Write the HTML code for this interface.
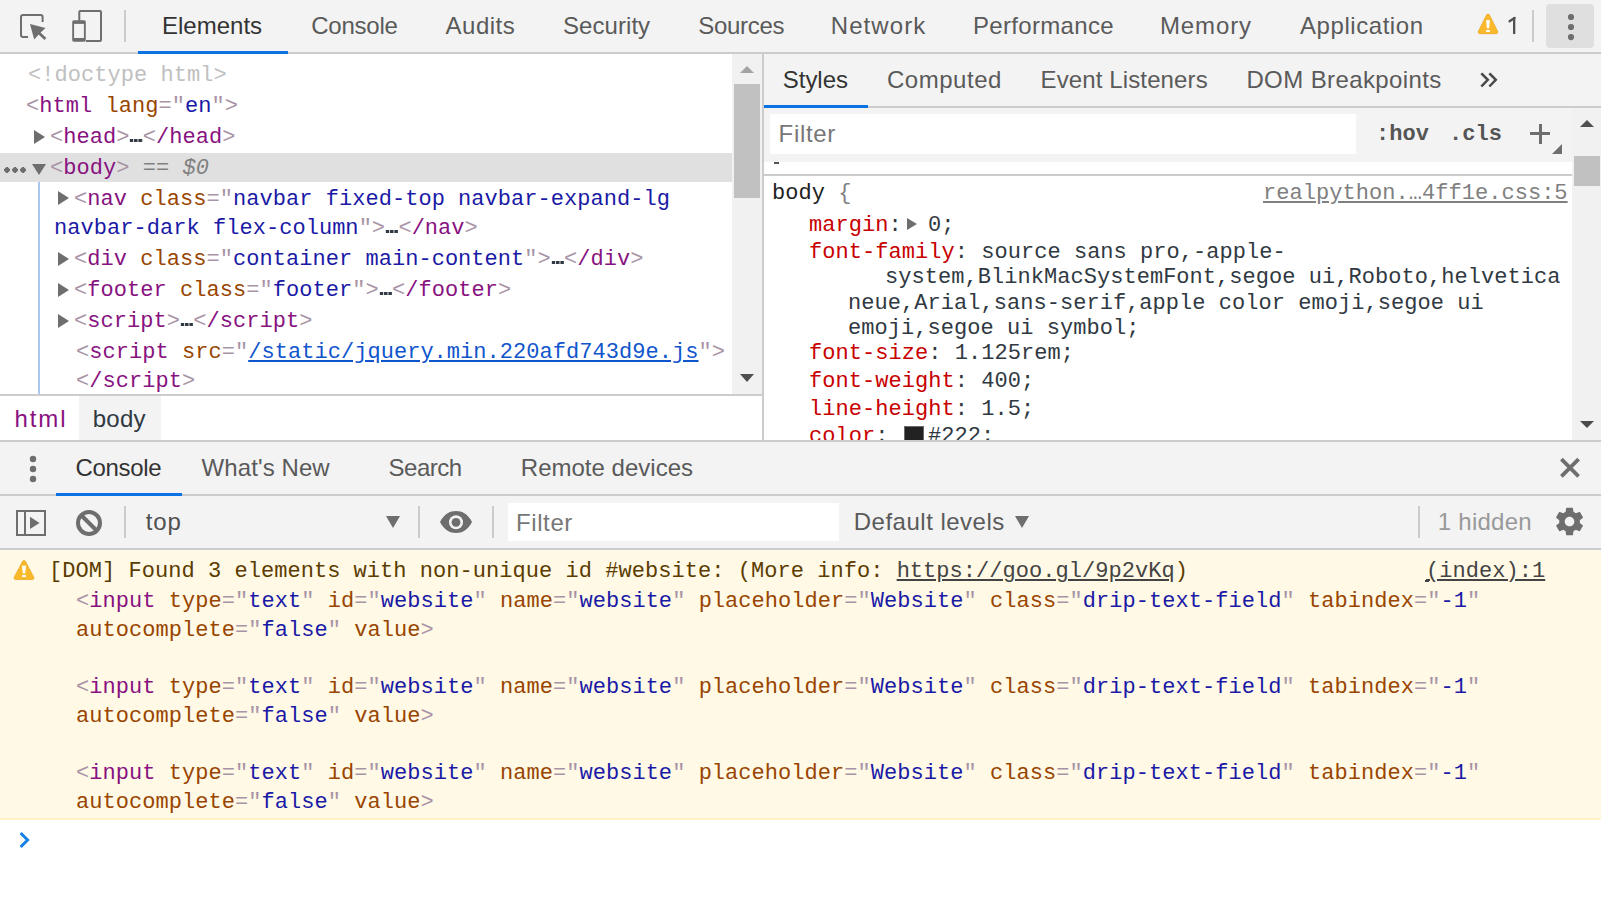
<!DOCTYPE html>
<html><head><meta charset="utf-8">
<style>
*{box-sizing:border-box;margin:0;padding:0}
html,body{width:1601px;height:898px;overflow:hidden;background:#fff}
body{position:relative;font-family:"Liberation Sans",sans-serif;font-size:24px;color:#333}
.a{position:absolute}
.bar{background:#f3f3f3}
.bd{background:#cccccc}
.t{position:absolute;white-space:pre;line-height:30px;font-size:24px;color:#5a5a5a}
.m{position:absolute;white-space:pre;font-family:"Liberation Mono",monospace;font-size:22px;line-height:29px;color:#222;letter-spacing:0.042px}
.tg{color:#881280}
.an{color:#994500}
.av{color:#1a1aa6}
.pu{color:#a894a6}
.dt{color:#c0c0c0}
.el{color:#222}
.pn{color:#c80000}
.pv{color:#303942}
.ul{text-decoration:underline}
.cl{color:#444;text-decoration:underline}
.ell{color:transparent;background:linear-gradient(90deg,#303942 3.2px,transparent 3.2px) 0.8px 14.3px/4.3px 3px repeat-x}
.lk{color:#1155cc;text-decoration:underline}
.tri-r{width:0;height:0;border-top:7px solid transparent;border-bottom:7px solid transparent;border-left:11px solid #6e6e6e}
.tri-d{width:0;height:0;border-left:7px solid transparent;border-right:7px solid transparent;border-top:11px solid #6e6e6e}
.dot3{width:22px;height:6px;background:radial-gradient(circle at 3px 3px,#6e6e6e 2.6px,transparent 3px) 0 0/8px 6px repeat-x}

</style></head>
<body>
<!-- ===== top toolbar ===== -->
<div class="a bar" style="left:0;top:0;width:1601px;height:52px"></div>
<div class="a bd" style="left:0;top:52px;width:1601px;height:2px"></div>
<div class="a" style="left:138px;top:51px;width:150px;height:3px;background:#0a72e2"></div>
<!-- top icons -->
<svg class="a" style="left:0;top:0" width="130" height="52" viewBox="0 0 130 52">
<path d="M28.1 37H23a2 2 0 0 1-2-2V17a2 2 0 0 1 2-2h17.6a2 2 0 0 1 2 2v5" fill="none" stroke="#6e6e6e" stroke-width="2"/>
<path d="M30 23.9L45.5 28.1L39.6 33.4L34.2 39.4Z" fill="#6e6e6e"/>
<path d="M38 32L45.4 39" stroke="#6e6e6e" stroke-width="2.8"/>
<path d="M86 41H100a1 1 0 0 0 1-1V12a1 1 0 0 0-1-1H80.3a1 1 0 0 0-1 1V21" fill="none" stroke="#6e6e6e" stroke-width="2"/>
<rect x="72.2" y="20.2" width="13.6" height="21.5" rx="1.6" fill="#6e6e6e"/>
<rect x="74.1" y="23.9" width="9.8" height="14.1" fill="#f3f3f3"/>
<rect x="124" y="10" width="2" height="32" fill="#cbcbcb"/>
</svg>
<svg class="a" style="left:1476px;top:12px" width="24" height="24" viewBox="0 0 24 24"><path d="M12 2C12.7 2 13.2 2.4 13.5 3L21.6 19.3C22.1 20.5 21.4 21.7 20.2 21.7H3.8C2.6 21.7 1.9 20.5 2.4 19.3L10.5 3C10.8 2.4 11.3 2 12 2Z" fill="#fab92b" stroke="#e6a31c" stroke-width="0.7"/><path d="M10.1 8H13.9L13.2 16.3H10.8Z" fill="#fff"/><rect x="10.1" y="18" width="3.8" height="2" fill="#fff"/></svg>
<svg class="a" style="left:1505px;top:14px" width="14" height="22" viewBox="0 0 14 22"><rect x="8" y="3.2" width="2.3" height="16.8" fill="#505050"/><path d="M9.6 3.9L4.6 7.3" stroke="#505050" stroke-width="2.3" stroke-linecap="round"/></svg>
<div class="a" style="left:1532px;top:10px;width:2px;height:32px;background:#cbcbcb"></div>
<div class="a" style="left:1546px;top:4px;width:48px;height:44px;background:#dfdfdf;border-radius:4px"></div>
<svg class="a" style="left:1564px;top:10px" width="14" height="34" viewBox="0 0 14 34"><circle cx="7" cy="7" r="3.1" fill="#6e6e6e"/><circle cx="7" cy="17" r="3.1" fill="#6e6e6e"/><circle cx="7" cy="27.1" r="3.1" fill="#6e6e6e"/></svg>

<div class="t" style="left:162.00px;top:11px;color:#333;letter-spacing:0.000px">Elements</div>
<div class="t" style="left:311.20px;top:11px;letter-spacing:-0.233px">Console</div>
<div class="t" style="left:445.60px;top:11px;letter-spacing:0.480px">Audits</div>
<div class="t" style="left:563.00px;top:11px;letter-spacing:0.058px">Security</div>
<div class="t" style="left:698.20px;top:11px;letter-spacing:-0.298px">Sources</div>
<div class="t" style="left:830.80px;top:11px;letter-spacing:1.066px">Network</div>
<div class="t" style="left:973.00px;top:11px;letter-spacing:0.320px">Performance</div>
<div class="t" style="left:1160.00px;top:11px;letter-spacing:0.880px">Memory</div>
<div class="t" style="left:1300.00px;top:11px;letter-spacing:0.560px">Application</div>

<!-- ===== elements panel ===== -->
<div class="a" style="left:0;top:54px;width:762px;height:340px;background:#fff;overflow:hidden">
</div>
<!-- selected row -->
<div class="a" style="left:0;top:153px;width:732px;height:29px;background:#e0e0e0"></div>
<!-- guide line -->
<div class="a" style="left:38px;top:182px;width:2px;height:212px;background:#a8c8ec"></div>
<div class="m dt" style="left:28px;top:61px">&lt;!doctype html&gt;</div>
<div class="m" style="left:26px;top:92px"><span class="pu">&lt;</span><span class="tg">html</span> <span class="an">lang</span><span class="pu">="</span><span class="av">en</span><span class="pu">"&gt;</span></div>
<div class="m" style="left:50px;top:123px"><span class="pu">&lt;</span><span class="tg">head</span><span class="pu">&gt;</span><span class="ell">…</span><span class="pu">&lt;</span><span class="tg">/head</span><span class="pu">&gt;</span></div>
<div class="m" style="left:50px;top:154px"><span class="pu">&lt;</span><span class="tg">body</span><span class="pu">&gt;</span> <span style="color:#808080">== <i>$0</i></span></div>
<div class="m" style="left:74px;top:185px"><span class="pu">&lt;</span><span class="tg">nav</span> <span class="an">class</span><span class="pu">="</span><span class="av">navbar fixed-top navbar-expand-lg</span></div>
<div class="m" style="left:54px;top:214px"><span class="av">navbar-dark flex-column</span><span class="pu">"&gt;</span><span class="ell">…</span><span class="pu">&lt;</span><span class="tg">/nav</span><span class="pu">&gt;</span></div>
<div class="m" style="left:74px;top:245px"><span class="pu">&lt;</span><span class="tg">div</span> <span class="an">class</span><span class="pu">="</span><span class="av">container main-content</span><span class="pu">"&gt;</span><span class="ell">…</span><span class="pu">&lt;</span><span class="tg">/div</span><span class="pu">&gt;</span></div>
<div class="m" style="left:74px;top:276px"><span class="pu">&lt;</span><span class="tg">footer</span> <span class="an">class</span><span class="pu">="</span><span class="av">footer</span><span class="pu">"&gt;</span><span class="ell">…</span><span class="pu">&lt;</span><span class="tg">/footer</span><span class="pu">&gt;</span></div>
<div class="m" style="left:74px;top:307px"><span class="pu">&lt;</span><span class="tg">script</span><span class="pu">&gt;</span><span class="ell">…</span><span class="pu">&lt;</span><span class="tg">/script</span><span class="pu">&gt;</span></div>
<div class="m" style="left:76px;top:338px"><span class="pu">&lt;</span><span class="tg">script</span> <span class="an">src</span><span class="pu">="</span><span class="lk">/static/jquery.min.220afd743d9e.js</span><span class="pu">"&gt;</span></div>
<div class="m" style="left:76px;top:367px"><span class="pu">&lt;</span><span class="tg">/script</span><span class="pu">&gt;</span></div>
<!-- triangles -->
<div class="a tri-r" style="left:34px;top:130px"></div>
<div class="a tri-d" style="left:32px;top:164px"></div>
<div class="a tri-r" style="left:58px;top:191px"></div>
<div class="a tri-r" style="left:58px;top:252px"></div>
<div class="a tri-r" style="left:58px;top:283px"></div>
<div class="a tri-r" style="left:58px;top:314px"></div>
<!-- dots on selected -->
<div class="a dot3" style="left:4px;top:167px"></div>
<!-- scrollbar -->
<div class="a" style="left:732px;top:54px;width:30px;height:340px;background:#f1f1f1"></div>
<div class="a" style="left:734px;top:84px;width:26px;height:114px;background:#c1c1c1"></div>
<div class="a" style="left:740px;top:66px;width:0;height:0;border-left:7px solid transparent;border-right:7px solid transparent;border-bottom:7px solid #a3a3a3"></div>
<div class="a" style="left:740px;top:374px;width:0;height:0;border-left:7px solid transparent;border-right:7px solid transparent;border-top:8px solid #505050"></div>
<!-- breadcrumbs -->
<div class="a bd" style="left:0;top:394px;width:762px;height:2px"></div>
<div class="a" style="left:79px;top:396px;width:82px;height:44px;background:#f3f3f3"></div>
<div class="t" style="left:14.40px;top:404px;color:#881280;letter-spacing:1.933px">html</div>
<div class="t" style="left:92.80px;top:404px;color:#303942;letter-spacing:0.200px">body</div>
<!-- divider -->
<div class="a bd" style="left:762px;top:54px;width:2px;height:386px"></div>


<!-- ===== styles pane ===== -->
<div class="a" style="left:764px;top:54px;width:837px;height:386px;background:#fff;overflow:hidden">
</div>
<!-- styles tabbar -->
<div class="a bar" style="left:764px;top:54px;width:837px;height:52px"></div>
<div class="a bd" style="left:764px;top:106px;width:837px;height:2px"></div>
<div class="a" style="left:764px;top:105px;width:104px;height:3px;background:#0a72e2"></div>
<div class="t" style="left:782.80px;top:65px;color:#333;letter-spacing:-0.040px">Styles</div>
<div class="t" style="left:887.00px;top:65px;letter-spacing:0.517px">Computed</div>
<div class="t" style="left:1040.60px;top:65px;letter-spacing:0.116px">Event Listeners</div>
<div class="t" style="left:1246.40px;top:65px;letter-spacing:0.399px">DOM Breakpoints</div>
<svg class="a" style="left:1476px;top:68px" width="28" height="24" viewBox="0 0 28 24"><path d="M6.2 6.2L11.8 11.8L6.2 17.6M14.2 6.2L19.8 11.8L14.2 17.6" fill="none" stroke="#4a4a4a" stroke-width="2.5" stroke-linecap="square"/></svg>
<!-- filter toolbar -->
<div class="a bar" style="left:764px;top:108px;width:837px;height:54px"></div>
<div class="a" style="left:770px;top:114px;width:586px;height:40px;background:#fff"></div>
<div class="t" style="left:778.60px;top:119px;color:#777;letter-spacing:0.680px">Filter</div>
<div class="m" style="left:1376px;top:120px;font-weight:bold;color:#555">:hov</div>
<div class="m" style="left:1449px;top:120px;font-weight:bold;color:#555">.cls</div>
<div class="a" style="left:1530px;top:132px;width:20px;height:3px;background:#6e6e6e"></div>
<div class="a" style="left:1539px;top:124px;width:3px;height:20px;background:#6e6e6e"></div>
<div class="a" style="left:1552px;top:144px;width:0;height:0;border-left:10px solid transparent;border-bottom:10px solid #6e6e6e"></div>
<!-- strip -->
<div class="a bd" style="left:764px;top:174px;width:808px;height:2px"></div>
<div class="a" style="left:774px;top:162px;width:5px;height:2px;background:#555"></div>
<!-- rule -->
<div class="m" style="left:772px;top:179px"><span style="color:#222">body</span> <span style="color:#808080">{</span></div>
<div class="m" style="left:1263px;top:179px;color:#808080;text-decoration:underline">realpython.…4ff1e.css:5</div>
<div class="m pn" style="left:809px;top:211px">margin<span class="pv">:</span></div>
<div class="a" style="left:907px;top:217.5px;width:0;height:0;border-top:6px solid transparent;border-bottom:6px solid transparent;border-left:10px solid #6e6e6e"></div>
<div class="m pv" style="left:928px;top:211px">0;</div>
<div class="m pn" style="left:809px;top:238px">font-family<span class="pv">: source sans pro,-apple-</span></div>
<div class="m pv" style="left:885px;top:263px">system,BlinkMacSystemFont,segoe ui,Roboto,helvetica</div>
<div class="m pv" style="left:848px;top:289px">neue,Arial,sans-serif,apple color emoji,segoe ui</div>
<div class="m pv" style="left:848px;top:314px">emoji,segoe ui symbol;</div>
<div class="m pn" style="left:809px;top:339px">font-size<span class="pv">: 1.125rem;</span></div>
<div class="m pn" style="left:809px;top:367px">font-weight<span class="pv">: 400;</span></div>
<div class="m pn" style="left:809px;top:395px">line-height<span class="pv">: 1.5;</span></div>
<div class="a" style="left:764px;top:420px;width:808px;height:20px;overflow:hidden">
<div class="m pn" style="left:45px;top:2px">color<span class="pv">: </span></div>
<div class="a" style="left:140px;top:6px;width:20px;height:20px;background:#222;border:1.5px solid #6a6a6a"></div>
<div class="m pv" style="left:164px;top:2px">#222;</div>
</div>
<!-- styles scrollbar -->
<div class="a" style="left:1572px;top:108px;width:29px;height:332px;background:#f1f1f1"></div>
<div class="a" style="left:1574px;top:156px;width:26px;height:30px;background:#c1c1c1"></div>
<div class="a" style="left:1580px;top:120px;width:0;height:0;border-left:7px solid transparent;border-right:7px solid transparent;border-bottom:7px solid #505050"></div>
<div class="a" style="left:1580px;top:421px;width:0;height:0;border-left:7px solid transparent;border-right:7px solid transparent;border-top:7px solid #4a4a4a"></div>


<!-- ===== drawer ===== -->
<div class="a bd" style="left:0;top:440px;width:1601px;height:2px"></div>
<div class="a bar" style="left:0;top:442px;width:1601px;height:52px"></div>
<div class="a bd" style="left:0;top:494px;width:1601px;height:2px"></div>
<div class="a" style="left:56px;top:493px;width:126px;height:3px;background:#0a72e2"></div>
<div class="a bar" style="left:0;top:496px;width:1601px;height:52px"></div>
<div class="a bd" style="left:0;top:548px;width:1601px;height:2px"></div>
<!-- drawer tabs -->
<svg class="a" style="left:26px;top:452px" width="14" height="34" viewBox="0 0 14 34"><circle cx="7" cy="7" r="3.2" fill="#6e6e6e"/><circle cx="7" cy="17" r="3.2" fill="#6e6e6e"/><circle cx="7" cy="27" r="3.2" fill="#6e6e6e"/></svg>
<div class="t" style="left:75.60px;top:453px;color:#333;letter-spacing:-0.333px">Console</div>
<div class="t" style="left:201.60px;top:453px;letter-spacing:0.091px">What's New</div>
<div class="t" style="left:388.60px;top:453px;letter-spacing:-0.520px">Search</div>
<div class="t" style="left:520.80px;top:453px;letter-spacing:0.013px">Remote devices</div>
<svg class="a" style="left:1556px;top:454px" width="28" height="28" viewBox="0 0 28 28"><path d="M5.4 5.2L22.6 22.4M22.6 5.2L5.4 22.4" stroke="#6e6e6e" stroke-width="3.8"/></svg>
<!-- console toolbar -->
<svg class="a" style="left:14px;top:508px" width="34" height="30" viewBox="0 0 34 30"><rect x="3" y="3" width="28" height="24" fill="none" stroke="#6e6e6e" stroke-width="2"/><rect x="10" y="3" width="2" height="24" fill="#6e6e6e"/><path d="M16 8.7L25.5 15L16 21Z" fill="#6e6e6e"/></svg>
<svg class="a" style="left:74px;top:508px" width="30" height="30" viewBox="0 0 30 30"><circle cx="15" cy="15" r="11" fill="none" stroke="#6e6e6e" stroke-width="4"/><path d="M7.5 7.5L22.5 22.5" stroke="#6e6e6e" stroke-width="4"/></svg>
<div class="a" style="left:124px;top:506px;width:2px;height:32px;background:#cbcbcb"></div>
<div class="t" style="left:145.80px;top:507px;color:#505050;letter-spacing:0.900px">top</div>
<div class="a" style="left:386px;top:516px;width:0;height:0;border-left:7px solid transparent;border-right:7px solid transparent;border-top:12px solid #6e6e6e"></div>
<div class="a" style="left:418px;top:506px;width:2px;height:32px;background:#cbcbcb"></div>
<svg class="a" style="left:438px;top:508px" width="36" height="28" viewBox="0 0 36 28"><path d="M2 14C6 6 12 3 18 3C24 3 30 6 34 14C30 22 24 25 18 25C12 25 6 22 2 14Z" fill="#6e6e6e"/><circle cx="18" cy="14.3" r="7" fill="#f3f3f3"/><circle cx="18" cy="14.3" r="4.4" fill="#6e6e6e"/></svg>
<div class="a" style="left:492px;top:506px;width:2px;height:32px;background:#cbcbcb"></div>
<div class="a" style="left:508px;top:503px;width:331px;height:38px;background:#fff"></div>
<div class="t" style="left:516.00px;top:508px;color:#777;letter-spacing:0.600px">Filter</div>
<div class="t" style="left:853.80px;top:507px;letter-spacing:0.493px">Default levels</div>
<div class="a" style="left:1015px;top:516px;width:0;height:0;border-left:7px solid transparent;border-right:7px solid transparent;border-top:12px solid #6e6e6e"></div>
<div class="a" style="left:1418px;top:506px;width:2px;height:32px;background:#cbcbcb"></div>
<div class="t" style="left:1437.80px;top:507px;color:#999;letter-spacing:0.255px">1 hidden</div>
<svg class="a" style="left:1553.4px;top:505.4px" width="33.1" height="33.1" viewBox="0 0 24 24"><path fill="#6e6e6e" d="M19.43 12.98c.04-.32.07-.64.07-.98s-.03-.66-.07-.98l2.11-1.65c.19-.15.24-.42.12-.64l-2-3.46c-.12-.22-.39-.3-.61-.22l-2.49 1c-.52-.4-1.08-.73-1.690-.98l-.38-2.65C14.46 2.18 14.25 2 14 2h-4c-.25 0-.46.18-.49.42l-.38 2.65c-.61.25-1.17.59-1.69.98l-2.49-1c-.23-.09-.49 0-.61.22l-2 3.46c-.13.22-.07.49.12.64l2.11 1.65c-.04.32-.07.65-.07.98s.03.66.07.98l-2.11 1.650c-.19.15-.24.42-.12.64l2 3.46c.12.22.39.3.61.22l2.49-1c.52.4 1.08.73 1.69.98l.38 2.65c.03.24.24.42.49.42h4c.25 0 .46-.18.49-.42l.38-2.65c.61-.25 1.17-.59 1.69-.98l2.49 1c.23.09.49 0 .61-.22l2-3.46c.12-.22.07-.49-.12-.64l-2.11-1.65zM12 15.5c-1.93 0-3.5-1.57-3.5-3.5s1.57-3.5 3.5-3.5 3.5 1.57 3.5 3.5-1.57 3.5-3.5 3.5z"/></svg>

<!-- warning message -->
<div class="a" style="left:0;top:550px;width:1601px;height:268px;background:#fff9e6"></div>
<div class="a" style="left:0;top:818px;width:1601px;height:2px;background:#fff3c4"></div>
<!-- warning icon -->
<svg class="a" style="left:13px;top:559px" width="22" height="22" viewBox="0 0 22 22"><path d="M11 1.5C11.6 1.5 12.1 1.8 12.4 2.3L20.8 18.3C21.3 19.3 20.7 20.5 19.5 20.5H2.5C1.3 20.5 0.7 19.3 1.2 18.3L9.6 2.3C9.9 1.8 10.4 1.5 11 1.5Z" fill="#fab92b" stroke="#e6a31c" stroke-width="0.7"/><path d="M8.9 6.8H13.1L12.2 14.6H9.8Z" fill="#fff"/><rect x="9.1" y="16" width="3.8" height="2.1" fill="#fff"/></svg>
<div class="m" style="left:49px;top:557px;color:#5c3c00">[DOM] Found 3 elements with non-unique id #website: (More info: <span class="cl">https://goo.gl/9p2vKq</span>)</div>
<div class="m cl" style="left:1426px;top:557px">(index):1</div>
<div class="a" style="left:1425px;top:580px;width:4px;height:2px;background:#444"></div>
<div class="m" style="left:76px;top:588px;line-height:28.67px"><span class="pu">&lt;</span><span class="tg">input</span> <span class="an">type</span><span class="pu">="</span><span class="av">text</span><span class="pu">"</span> <span class="an">id</span><span class="pu">="</span><span class="av">website</span><span class="pu">"</span> <span class="an">name</span><span class="pu">="</span><span class="av">website</span><span class="pu">"</span> <span class="an">placeholder</span><span class="pu">="</span><span class="av">Website</span><span class="pu">"</span> <span class="an">class</span><span class="pu">="</span><span class="av">drip-text-field</span><span class="pu">"</span> <span class="an">tabindex</span><span class="pu">="</span><span class="av">-1</span><span class="pu">"</span>
<span class="an">autocomplete</span><span class="pu">="</span><span class="av">false</span><span class="pu">"</span> <span class="an">value</span><span class="pu">&gt;</span>

<span class="pu">&lt;</span><span class="tg">input</span> <span class="an">type</span><span class="pu">="</span><span class="av">text</span><span class="pu">"</span> <span class="an">id</span><span class="pu">="</span><span class="av">website</span><span class="pu">"</span> <span class="an">name</span><span class="pu">="</span><span class="av">website</span><span class="pu">"</span> <span class="an">placeholder</span><span class="pu">="</span><span class="av">Website</span><span class="pu">"</span> <span class="an">class</span><span class="pu">="</span><span class="av">drip-text-field</span><span class="pu">"</span> <span class="an">tabindex</span><span class="pu">="</span><span class="av">-1</span><span class="pu">"</span>
<span class="an">autocomplete</span><span class="pu">="</span><span class="av">false</span><span class="pu">"</span> <span class="an">value</span><span class="pu">&gt;</span>

<span class="pu">&lt;</span><span class="tg">input</span> <span class="an">type</span><span class="pu">="</span><span class="av">text</span><span class="pu">"</span> <span class="an">id</span><span class="pu">="</span><span class="av">website</span><span class="pu">"</span> <span class="an">name</span><span class="pu">="</span><span class="av">website</span><span class="pu">"</span> <span class="an">placeholder</span><span class="pu">="</span><span class="av">Website</span><span class="pu">"</span> <span class="an">class</span><span class="pu">="</span><span class="av">drip-text-field</span><span class="pu">"</span> <span class="an">tabindex</span><span class="pu">="</span><span class="av">-1</span><span class="pu">"</span>
<span class="an">autocomplete</span><span class="pu">="</span><span class="av">false</span><span class="pu">"</span> <span class="an">value</span><span class="pu">&gt;</span></div>
<!-- prompt -->
<svg class="a" style="left:16px;top:830px" width="18" height="20" viewBox="0 0 18 20"><path d="M4.6 3L11.6 10L4.6 17" fill="none" stroke="#1582e6" stroke-width="3"/></svg>

</body></html>
